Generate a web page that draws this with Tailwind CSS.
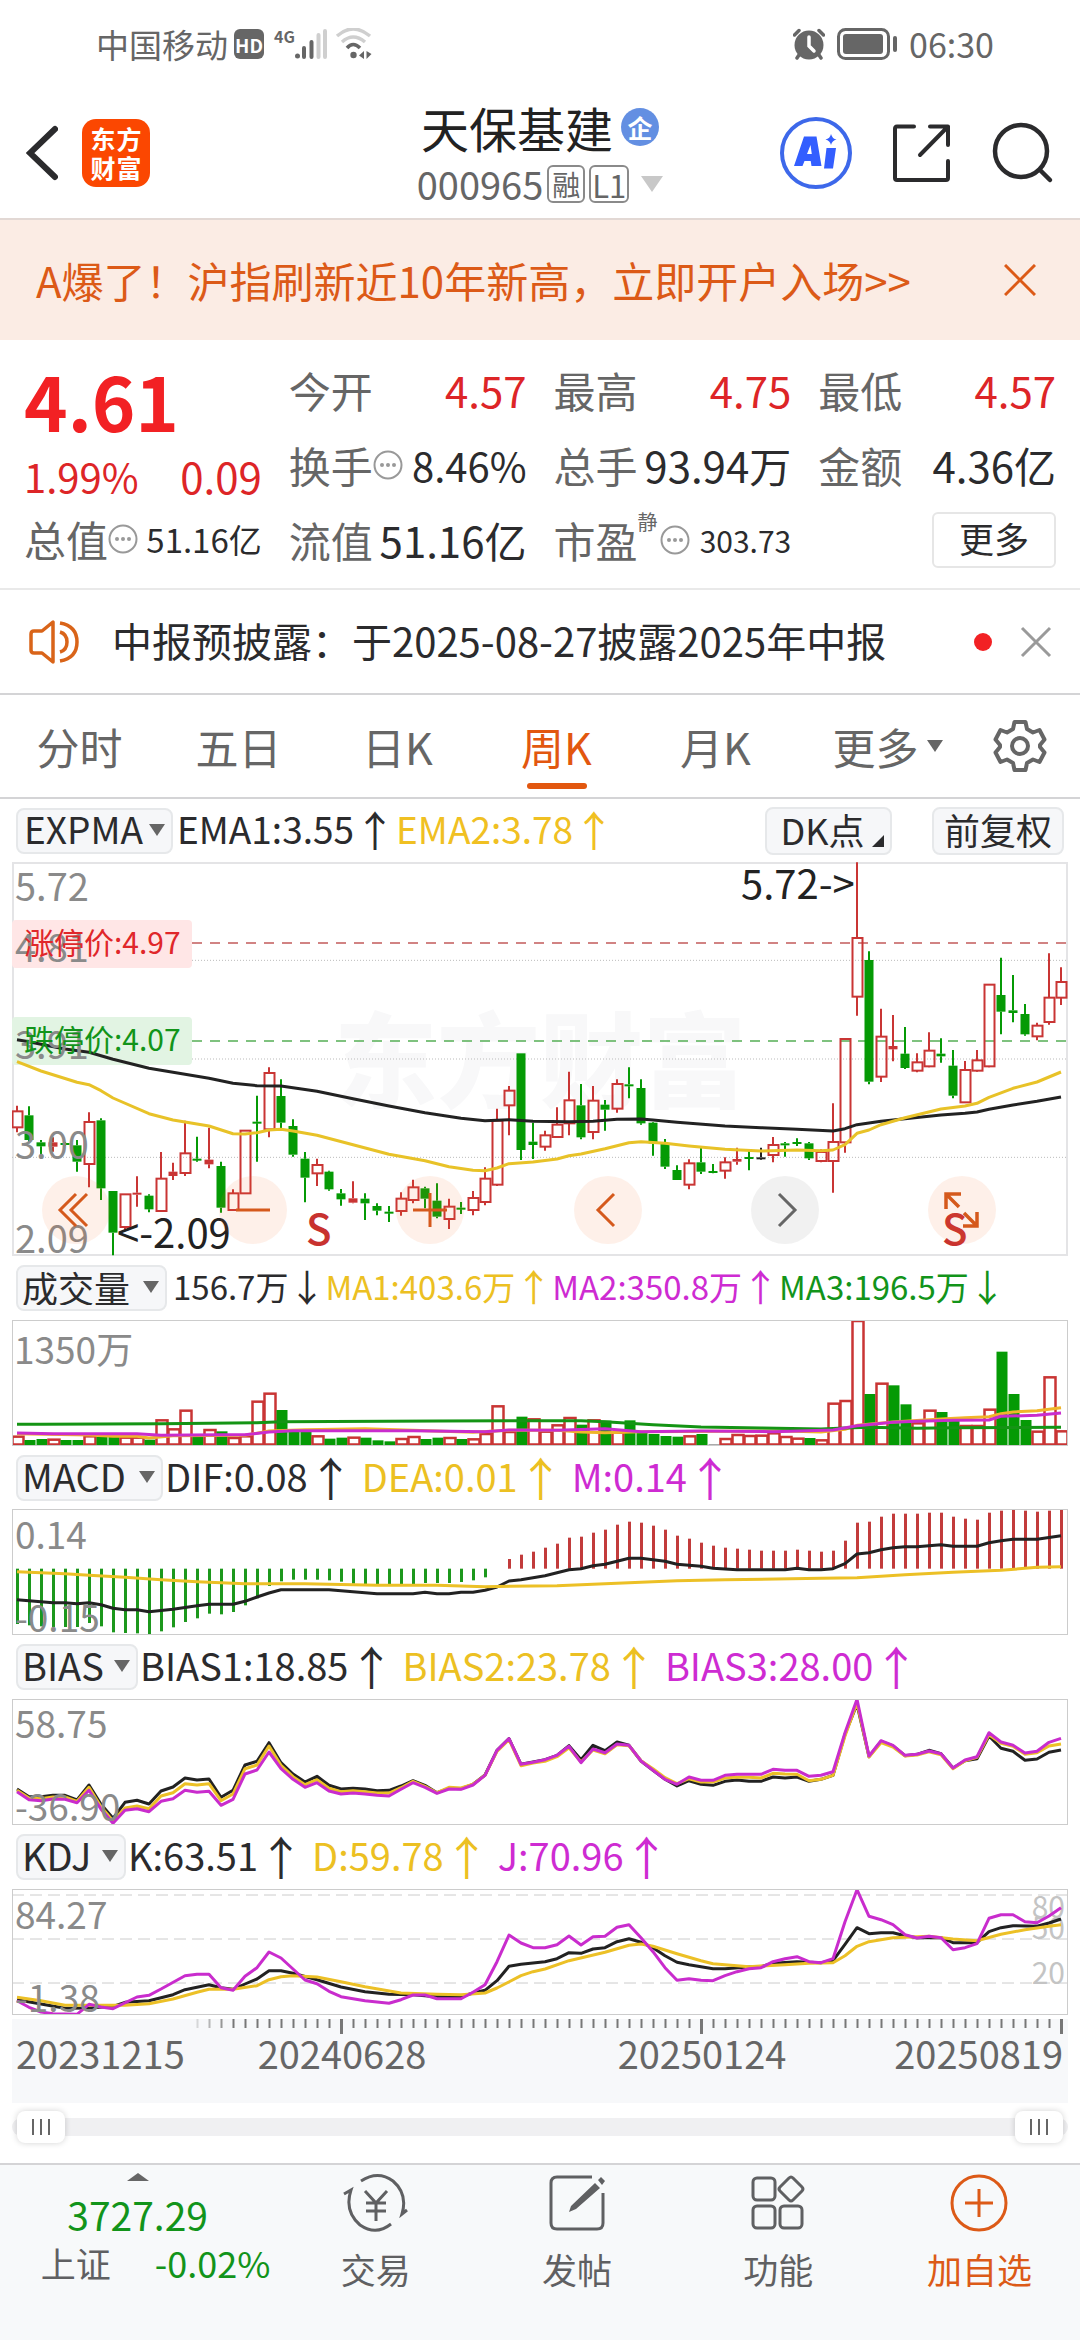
<!DOCTYPE html>
<html lang="zh-CN">
<head>
<meta charset="utf-8">
<meta name="viewport" content="width=device-width, initial-scale=1">
<title>天保基建 000965</title>
<script src="https://cdn.jsdelivr.net/npm/@tailwindcss/browser@4"></script>
</head>
<body class="flex min-h-screen flex-col bg-white font-['Noto_Sans_CJK_SC',sans-serif] leading-none text-[#2b2b2d]">

<!-- status bar -->
<div class="flex h-22 items-center justify-between pr-[86px] pl-24 text-[#666]">
  <div class="flex items-center">
    <span class="text-[33px]">中国移动</span>
    <span class="ml-[6px] flex size-[30px] items-center justify-center rounded-md bg-[#666] text-[19px] font-bold text-white">HD</span>
    <span class="ml-[10px] self-start text-[16px] font-bold">4G</span>
    <svg class="h-8 w-8" viewBox="0 0 32 32"><circle cx="2.5" cy="28" r="2.5" fill="#666"/><path d="M9 20v9M16.500 14v15" stroke="#666" stroke-width="4" stroke-linecap="round"/><path d="M23.500 7v22M30 3v26" stroke="#cfcfcf" stroke-width="4" stroke-linecap="round"/></svg>
    <svg class="ml-2 h-8 w-10" viewBox="0 0 40 32" fill="none" stroke-width="3.500"><path d="M2 8Q18-6 35 8M7 14Q18 4 30 14" stroke="#cfcfcf"/><path d="M12 20Q18 13 25 20" stroke="#666"/><circle cx="18.500" cy="27" r="3.200" fill="#666"/><path d="M29 23v8l-5-3.500zM31.500 23v8l5-5z" fill="#666"/></svg>
  </div>
  <div class="flex items-center">
    <svg class="h-8 w-8" viewBox="0 0 32 32" fill="none"><circle cx="16" cy="17" r="14.500" fill="#666"/><path d="M16 9v9l5 5" stroke="#fff" stroke-width="3.500" stroke-linecap="round"/><path d="M1.500 7l4.500-4.500M30.500 7l-4.500-4.500M6 27l-2 3M26 27l2 3" stroke="#666" stroke-width="3.500" stroke-linecap="round"/></svg>
    <svg class="ml-3 h-8 w-[60px]" viewBox="0 0 60 32"><rect x="1.500" y="1.500" width="50" height="29" rx="7" fill="none" stroke="#666" stroke-width="3"/><rect x="6" y="6" width="40" height="20" rx="3" fill="#666"/><rect x="56" y="8" width="4" height="16" rx="2" fill="#666"/></svg>
    <time class="ml-3 text-[34px]">06:30</time>
  </div>
</div>

<!-- title bar -->
<header class="grid h-[132px] grid-cols-[1fr_auto_1fr] items-center border-b-2 border-[#e2d8d4] pr-[26px] pl-[26px]">
  <div class="flex items-center gap-6">
    <button type="button" aria-label="返回"><svg class="h-15 w-8" viewBox="0 0 32 60" fill="none" stroke="#2b2b2d" stroke-width="6" stroke-linecap="round"><path d="M29 6L4 30L29 54"/></svg></button>
    <a href="#" class="grid size-17 grid-cols-2 content-center justify-items-center rounded-[14px] bg-[#fb4701] px-2 text-[25px] leading-[29px] font-bold text-white"><span>东</span><span>方</span><span>财</span><span>富</span></a>
  </div>
  <div class="flex flex-col items-center gap-[14px]">
    <h1 class="flex items-center gap-2 text-5xl text-[#222]">天保基建<span class="flex size-[38px] items-center justify-center rounded-full bg-[#638fe2] text-[25px] font-bold text-white">企</span></h1>
    <div class="flex items-center text-[38px] text-[#666]">000965
      <span class="ml-1 flex size-[38px] items-center justify-center rounded-md border-2 border-[#8a8a8a] text-[28px]">融</span>
      <span class="ml-1 flex h-[38px] w-10 items-center justify-center rounded-md border-2 border-[#8a8a8a] text-[31px]">L1</span>
      <svg class="ml-3 h-4 w-[22px]" viewBox="0 0 22 16"><path d="M0 0H22L11 16z" fill="#c8c8c8"/></svg>
    </div>
  </div>
  <div class="flex items-center justify-end gap-10">
    <button type="button" aria-label="AI"><svg class="size-[72px]" viewBox="0 0 72 72"><circle cx="36" cy="36" r="34" fill="none" stroke="#3d68ea" stroke-width="4"/><path fill="#335eff" fill-rule="evenodd" d="M24 19.500h12.500l5 29.500h-10l-.8-5h-6.200l-2 5h-8.500zM30.500 28l-3.500 9h4.800zM46.500 31h9.500l-3 20.500h-9zM51 17q1.500 5 5.500 5.500q-4.500 1-5.500 5.500q-1-4.500-5.500-5.500q4.500-1 5.500-5.500z"/></svg></button>
    <button type="button" aria-label="分享"><svg class="size-15" viewBox="0 0 60 60" fill="none" stroke="#2b2b2d" stroke-width="4" stroke-linecap="round" stroke-linejoin="round"><path d="M22 3.500H5Q3 3.500 3 6V55Q3 57 5 57H54Q56 57 56 55V38M38 3.500H56V22M56 3.500L28 32"/></svg></button>
    <button type="button" aria-label="搜索"><svg class="size-[62px]" viewBox="0 0 62 62" fill="none" stroke="#2b2b2d" stroke-width="4.500" stroke-linecap="round"><circle cx="29" cy="29" r="26"/><path d="M48 48L58 58"/></svg></button>
  </div>
</header>

<!-- promotion banner -->
<section class="flex h-30 items-center justify-between bg-[#fbece4] pr-11 pl-9 text-[#dc5a17]">
  <a href="#" class="text-[42px]">A爆了！沪指刷新近10年新高，立即开户入场&gt;&gt;</a>
  <button type="button" aria-label="关闭"><svg class="size-8" viewBox="0 0 32 32" stroke="#dc5a17" stroke-width="3"><path d="M1 1L31 31M31 1L1 31"/></svg></button>
</section>

<!-- quote summary -->
<section class="grid h-[250px] grid-cols-4 gap-x-[27px] border-b-2 border-[#e9e9e9] px-6 pt-3 text-[42px] whitespace-nowrap">
  <div class="flex flex-col text-[#dd2527]">
    <div class="flex h-24 items-center text-[74px] font-bold text-[#f22124]">4.61</div>
    <div class="flex h-14 items-center justify-between"><span class="text-[40px]">1.99%</span><span>0.09</span></div>
    <div class="flex h-[70px] items-center justify-between text-[#666]"><span class="flex items-center">总值<svg class="size-[30px]" viewBox="0 0 30 30" fill="#999"><circle cx="15" cy="15" r="13.500" fill="none" stroke="#999" stroke-width="2"/><circle cx="9" cy="15" r="2"/><circle cx="15" cy="15" r="2"/><circle cx="21" cy="15" r="2"/></svg></span><span class="text-[33px] text-[#2b2b2d]">51.16亿</span></div>
  </div>
  <div class="grid grid-rows-[75px_75px_75px] *:flex *:items-center *:justify-between">
    <div><span class="text-[#666]">今开</span><span class="text-[#dd2527]">4.57</span></div>
    <div><span class="flex items-center text-[#666]">换手<svg class="size-[30px]" viewBox="0 0 30 30" fill="#999"><circle cx="15" cy="15" r="13.500" fill="none" stroke="#999" stroke-width="2"/><circle cx="9" cy="15" r="2"/><circle cx="15" cy="15" r="2"/><circle cx="21" cy="15" r="2"/></svg></span><span class="text-[40px]">8.46%</span></div>
    <div><span class="text-[#666]">流值</span><span>51.16亿</span></div>
  </div>
  <div class="grid grid-rows-[75px_75px_75px] *:flex *:items-center *:justify-between">
    <div><span class="text-[#666]">最高</span><span class="text-[#dd2527]">4.75</span></div>
    <div><span class="text-[#666]">总手</span><span>93.94万</span></div>
    <div><span class="flex items-center text-[#666]">市盈<span class="-mt-9 text-[20px]">静</span><svg class="ml-[2px] size-[30px]" viewBox="0 0 30 30" fill="#999"><circle cx="15" cy="15" r="13.500" fill="none" stroke="#999" stroke-width="2"/><circle cx="9" cy="15" r="2"/><circle cx="15" cy="15" r="2"/><circle cx="21" cy="15" r="2"/></svg></span><span class="text-[30px]">303.73</span></div>
  </div>
  <div class="grid grid-rows-[75px_75px_75px] *:flex *:items-center *:justify-between">
    <div><span class="text-[#666]">最低</span><span class="text-[#dd2527]">4.57</span></div>
    <div><span class="text-[#666]">金额</span><span>4.36亿</span></div>
    <div><button type="button" class="ml-auto h-14 w-31 rounded-md border-2 border-[#e6e6e6] pb-1 text-[35px]">更多</button></div>
  </div>
</section>

<!-- announcement -->
<section class="flex h-[105px] items-center border-b-2 border-[#d4d4d6] pr-7 pl-7">
  <svg class="h-11 w-14" viewBox="0 0 56 44" fill="none" stroke="#d96419" stroke-width="3.500" stroke-linejoin="round"><path d="M25 2V42L14 33H6Q3 33 3 30V14Q3 11 6 11H14zM32 12Q39 14 39 22T32 32M32 3Q49 6 49 22T32 41"/></svg>
  <a href="#" class="ml-7 pb-1 text-[40px]">中报预披露：于2025-08-27披露2025年中报</a>
  <span class="ml-auto size-[18px] rounded-full bg-[#f22124]"></span>
  <button type="button" aria-label="关闭" class="ml-7"><svg class="size-8" viewBox="0 0 32 32" stroke="#9a9a9a" stroke-width="3"><path d="M2 2L30 30M30 2L2 30"/></svg></button>
</section>

<!-- period tabs -->
<nav class="grid h-[104px] grid-cols-[159fr_159fr_159fr_159fr_159fr_185fr_80fr] border-b-2 border-[#d4d4d6] pr-5 text-[43px] text-[#666]">
  <button type="button">分时</button>
  <button type="button">五日</button>
  <button type="button">日K</button>
  <button type="button" class="relative text-[#e2570f]">周K<span class="absolute bottom-2 left-1/2 h-[6px] w-15 -translate-x-1/2 rounded-full bg-[#e2570f]"></span></button>
  <button type="button">月K</button>
  <button type="button" class="flex items-center justify-center gap-2">更多<svg class="h-3 w-4" viewBox="0 0 16 12"><path d="M0 0H16L8 12z" fill="#666"/></svg></button>
  <button type="button" aria-label="设置" class="flex items-center justify-center"><svg class="size-[54px]" viewBox="0 0 54 54" fill="none" stroke="#666" stroke-width="4" stroke-linejoin="round"><path d="M21.500 3H32.500L34 10L40 13.500L46.500 11L51.500 20.500L47 26V28L51.500 33.500L46.500 43L40 40.500L34 44L32.500 51H21.500L20 44L14 40.500L7.500 43L2.500 33.500L7 28V26L2.500 20.500L7.500 11L14 13.500L20 10z"/><circle cx="27" cy="27" r="8"/></svg></button>
</nav>

<main class="px-3">
  <!-- price -->
  <div class="flex h-[63px] items-center pl-1 text-[37px] [&>span]:flex [&>span]:items-center [&>span]:pb-1">
    <label class="relative block"><select aria-label="主图指标" class="block h-[46px] w-[157px] appearance-none rounded-lg border-2 border-[#e6e8ea] bg-[#f6f7f9] pb-1 pl-[6px]"><option>EXPMA</option></select><svg class="pointer-events-none absolute top-4 right-2 h-3 w-4" viewBox="0 0 16 12"><path d="M0 0H16L8 12z" fill="#666"/></svg></label>
    <span class="ml-1">EMA1:3.55<i class="text-[42px] not-italic">↑</i></span>
    <span class="text-[#f0c022]">EMA2:3.78<i class="text-[42px] not-italic">↑</i></span>
    <button type="button" class="relative ml-auto h-12 w-[127px] rounded-lg border-2 border-[#e6e8ea] bg-[#f6f7f9] pr-3 pb-1 text-4xl">DK点<svg class="absolute right-[6px] bottom-[6px] size-3" viewBox="0 0 12 12"><path d="M12 0V12H0z" fill="#2b2b2d"/></svg></button>
    <button type="button" class="mr-1 ml-10 h-12 w-[132px] rounded-lg border-2 border-[#e6e8ea] bg-[#f6f7f9] pb-1 text-4xl">前复权</button>
  </div>
  <div class="relative">
    <svg id="price" class="block w-full" viewBox="0 0 1056 394"></svg>
    <div class="absolute right-[72px] bottom-3 left-[30px] flex justify-between *:flex *:size-17 *:items-center *:justify-center *:rounded-full">
      <button type="button" aria-label="最左" class="bg-[#f26a2a]/10"><svg class="size-10" viewBox="0 0 40 40" fill="none" stroke="#d5591c" stroke-width="3"><path d="M20 4L4 20L20 36M31 4L15 20L31 36"/></svg></button>
      <button type="button" aria-label="缩小" class="bg-[#f26a2a]/10"><svg class="size-10" viewBox="0 0 40 40" stroke="#d5591c" stroke-width="3"><path d="M3 20H37"/></svg></button>
      <button type="button" aria-label="放大" class="bg-[#f26a2a]/10"><svg class="size-10" viewBox="0 0 40 40" stroke="#d5591c" stroke-width="3"><path d="M3 20H37M20 3V37"/></svg></button>
      <button type="button" aria-label="左移" class="bg-[#f26a2a]/10"><svg class="size-10" viewBox="0 0 40 40" fill="none" stroke="#d5591c" stroke-width="3"><path d="M26 4L10 20L26 36"/></svg></button>
      <button type="button" aria-label="右移" class="bg-[#777]/10"><svg class="size-10" viewBox="0 0 40 40" fill="none" stroke="#666" stroke-width="3"><path d="M14 4L30 20L14 36"/></svg></button>
      <button type="button" aria-label="全屏" class="bg-[#f26a2a]/10"><svg class="size-10" viewBox="0 0 40 40" fill="none" stroke="#d5591c" stroke-width="3.500"><path d="M4 19V4H19M4 4L17 17M22 23L35 36M35 22V36H21"/></svg></button>
    </div>
  </div>

  <!-- volume -->
  <div class="flex h-16 items-center pl-1 text-[33px] [&>span]:flex [&>span]:items-center [&>span]:pb-1">
    <label class="relative block"><select aria-label="成交量指标" class="block h-[46px] w-[151px] appearance-none rounded-lg border-2 border-[#e6e8ea] bg-[#f6f7f9] pb-1 pl-1 text-4xl"><option>成交量</option></select><svg class="pointer-events-none absolute top-4 right-2 h-3 w-4" viewBox="0 0 16 12"><path d="M0 0H16L8 12z" fill="#666"/></svg></label>
    <span class="ml-[6px]">156.7万<i class="text-[37px] not-italic">↓</i></span>
    <span class="text-[#ecc022]">MA1:403.6万<i class="text-[37px] not-italic">↑</i></span>
    <span class="text-[#ce2bd2]">MA2:350.8万<i class="text-[37px] not-italic">↑</i></span>
    <span class="text-[#12941a]">MA3:196.5万<i class="text-[37px] not-italic">↓</i></span>
  </div>
  <svg id="volume" class="block w-full" viewBox="0 0 1056 126"></svg>

  <!-- MACD -->
  <div class="flex h-[63px] items-center pl-1 text-[38px] [&>span]:flex [&>span]:items-center [&>span]:pb-1">
    <label class="relative block"><select aria-label="MACD指标" class="block h-[46px] w-[147px] appearance-none rounded-lg border-2 border-[#e6e8ea] bg-[#f6f7f9] pb-1 pl-1"><option>MACD</option></select><svg class="pointer-events-none absolute top-4 right-2 h-3 w-4" viewBox="0 0 16 12"><path d="M0 0H16L8 12z" fill="#666"/></svg></label>
    <span class="ml-[2px]">DIF:0.08<i class="text-[46px] not-italic">↑</i></span>
    <span class="ml-2 text-[#ecc022]">DEA:0.01<i class="text-[46px] not-italic">↑</i></span>
    <span class="ml-2 text-[#ce2bd2]">M:0.14<i class="text-[46px] not-italic">↑</i></span>
  </div>
  <svg id="macd" class="block w-full" viewBox="0 0 1056 126"></svg>

  <!-- BIAS -->
  <div class="flex h-16 items-center pl-1 text-[38px] [&>span]:flex [&>span]:items-center [&>span]:pb-1">
    <label class="relative block"><select aria-label="BIAS指标" class="block h-[46px] w-[122px] appearance-none rounded-lg border-2 border-[#e6e8ea] bg-[#f6f7f9] pb-1 pl-1"><option>BIAS</option></select><svg class="pointer-events-none absolute top-4 right-2 h-3 w-4" viewBox="0 0 16 12"><path d="M0 0H16L8 12z" fill="#666"/></svg></label>
    <span class="ml-[2px]">BIAS1:18.85<i class="text-[46px] not-italic">↑</i></span>
    <span class="ml-2 text-[#ecc022]">BIAS2:23.78<i class="text-[46px] not-italic">↑</i></span>
    <span class="ml-2 text-[#ce2bd2]">BIAS3:28.00<i class="text-[46px] not-italic">↑</i></span>
  </div>
  <svg id="bias" class="block w-full" viewBox="0 0 1056 126"></svg>

  <!-- KDJ -->
  <div class="flex h-16 items-center pl-1 text-[38px] [&>span]:flex [&>span]:items-center [&>span]:pb-1">
    <label class="relative block"><select aria-label="KDJ指标" class="block h-[46px] w-[110px] appearance-none rounded-lg border-2 border-[#e6e8ea] bg-[#f6f7f9] pb-1 pl-1"><option>KDJ</option></select><svg class="pointer-events-none absolute top-4 right-2 h-3 w-4" viewBox="0 0 16 12"><path d="M0 0H16L8 12z" fill="#666"/></svg></label>
    <span class="ml-[2px]">K:63.51<i class="text-[46px] not-italic">↑</i></span>
    <span class="ml-2 text-[#ecc022]">D:59.78<i class="text-[46px] not-italic">↑</i></span>
    <span class="ml-2 text-[#ce2bd2]">J:70.96<i class="text-[46px] not-italic">↑</i></span>
  </div>
  <svg id="kdj" class="block w-full" viewBox="0 0 1056 126"></svg>

  <!-- date axis -->
  <svg id="axis" class="mt-1 block w-full bg-[#f7f8fa]" viewBox="0 0 1056 84"></svg>

  <!-- visible range -->
  <div class="mt-2 grid h-8 items-center *:col-start-1 *:row-start-1">
    <div class="h-[18px] rounded-full bg-[#f0f0f2]"></div>
    <input type="range" aria-label="起始日期" min="0" max="87" value="0" class="pointer-events-none mx-[5px] h-8 appearance-none bg-transparent [&::-webkit-slider-thumb]:pointer-events-auto [&::-webkit-slider-thumb]:h-8 [&::-webkit-slider-thumb]:w-12 [&::-webkit-slider-thumb]:appearance-none [&::-webkit-slider-thumb]:rounded-lg [&::-webkit-slider-thumb]:bg-white [&::-webkit-slider-thumb]:bg-[repeating-linear-gradient(90deg,#666_0_2px,transparent_2px_8px)] [&::-webkit-slider-thumb]:bg-[length:18px_16px] [&::-webkit-slider-thumb]:bg-center [&::-webkit-slider-thumb]:bg-no-repeat [&::-webkit-slider-thumb]:shadow-[0_0_6px_rgba(0,0,0,0.18)]">
    <input type="range" aria-label="结束日期" min="0" max="87" value="87" class="pointer-events-none mx-[5px] h-8 appearance-none bg-transparent [&::-webkit-slider-thumb]:pointer-events-auto [&::-webkit-slider-thumb]:h-8 [&::-webkit-slider-thumb]:w-12 [&::-webkit-slider-thumb]:appearance-none [&::-webkit-slider-thumb]:rounded-lg [&::-webkit-slider-thumb]:bg-white [&::-webkit-slider-thumb]:bg-[repeating-linear-gradient(90deg,#666_0_2px,transparent_2px_8px)] [&::-webkit-slider-thumb]:bg-[length:18px_16px] [&::-webkit-slider-thumb]:bg-center [&::-webkit-slider-thumb]:bg-no-repeat [&::-webkit-slider-thumb]:shadow-[0_0_6px_rgba(0,0,0,0.18)]">
  </div>
</main>

<!-- bottom bar -->
<footer class="mt-5 grid grow grid-cols-[275fr_201fr_201fr_201fr_201fr] items-start border-t-2 border-[#d4d4d6] bg-[#f7f9fa] text-[35px] text-[#5f6062]">
  <a href="#" class="flex flex-col items-center pt-2">
    <svg class="h-2 w-[22px]" viewBox="0 0 22 8"><path d="M0 8H22L11 0z" fill="#666"/></svg>
    <span class="mt-[14px] text-[39px] text-[#12941a]">3727.29</span>
    <span class="mt-2 flex items-center gap-11 pl-9">上证<span class="text-4xl text-[#12941a]">-0.02%</span></span>
  </a>
  <button type="button" class="flex flex-col items-center gap-[18px] pt-2"><svg class="h-[60px] w-[68px]" viewBox="0 0 68 60" fill="none" stroke="#5f6062" stroke-width="3"><path d="M19 8Q36-3 51 8Q66 21 60 41L65 37M49 51Q34 63 18 52Q2 38 9 17L2 21M23 18L34 30L45 18M24 30H44M24 38H44M34 30V48"/></svg>交易</button>
  <button type="button" class="flex flex-col items-center gap-[18px] pt-2"><svg class="size-15" viewBox="0 0 60 60" fill="none" stroke="#5f6062" stroke-width="3"><path d="M45 4H10Q4 4 4 10V50Q4 56 10 56H50Q56 56 56 50V20"/><path d="M48 10L53 15L29 36L22 39L24 33zM51 7L54 4L58 8L55 12z" fill="#5f6062" stroke="none"/></svg>发帖</button>
  <button type="button" class="flex flex-col items-center gap-[18px] pt-2"><svg class="size-15" viewBox="0 0 60 60" fill="none" stroke="#5f6062" stroke-width="3"><rect x="5" y="5" width="22" height="22" rx="4"/><rect x="5" y="33" width="22" height="22" rx="4"/><rect x="32" y="33" width="22" height="22" rx="4"/><path d="M41 5Q43 3 45 5L54 14Q56 16 54 18L45 27Q43 29 41 27L32 18Q30 16 32 14z"/></svg>功能</button>
  <button type="button" class="flex flex-col items-center gap-[18px] pt-2 text-[#dc5a17]"><svg class="size-15" viewBox="0 0 60 60" fill="none" stroke="#dc5a17" stroke-width="3"><circle cx="30" cy="30" r="27"/><path d="M16 30H44M30 16V44"/></svg>加自选</button>
</footer>

<script>
const RED = '#c93534', GREEN = '#059a05', BLACK = '#222', YELLOW = '#ecc026', PURPLE = '#c92ccd';
const NS = 'http://www.w3.org/2000/svg';
const X = i => 5 + 12 * i;

function el(svg, tag, attrs, text) {
  const n = document.createElementNS(NS, tag);
  for (const k in attrs) n.setAttribute(k, attrs[k]);
  if (text) n.textContent = text;
  svg.appendChild(n);
  return n;
}
// Series values are stored in thirds of a drawing unit, counted from each panel's own origin.
const scale = top => v => (v - top) / 3;
function label(svg, x, y, text, size = 37, fill = '#8a8a8a', extra = {}) {
  el(svg, 'text', { x, y, 'font-size': size, fill, ...extra }, text);
}
function line(svg, y, data, color, width = 3) {
  const pts = data.trim().split(/\s+/).map(p => { const [i, v] = p.split(','); return X(+i) + ',' + y(+v).toFixed(1); });
  el(svg, 'polyline', { points: pts.join(' '), fill: 'none', stroke: color, 'stroke-width': width, 'stroke-linejoin': 'round' });
}
function frame(svg, h, color = '#ccc') {
  el(svg, 'rect', { x: .5, y: .5, width: 1055, height: h - 1, fill: 'none', stroke: color });
}

// ---- price: colour high bodyTop bodyBottom low
{
  const s = document.getElementById('price'), y = scale(36);
  el(s, 'rect', { x: 1, y: 1, width: 1054, height: 392, fill: 'none', stroke: '#e4e4e6', 'stroke-width': 2 });
  label(s, 322, 238, '东方财富', 103, '#f8f8f9', { 'font-weight': 900 });
  for (const v of [331, 627, 922]) el(s, 'path', { d: `M0 ${y(v)}H1056`, stroke: '#bbb', 'stroke-dasharray': '1 2' });
  el(s, 'path', { d: 'M0 81H1056', stroke: '#c25b5b', 'stroke-width': 1.5, 'stroke-dasharray': '10 8' });
  el(s, 'path', { d: 'M0 179H1056', stroke: '#56ae56', 'stroke-width': 1.5, 'stroke-dasharray': '10 8' });
  el(s, 'rect', { x: 0, y: 58, width: 180, height: 48, rx: 4, fill: '#ffe6e6' });
  el(s, 'rect', { x: 0, y: 155, width: 180, height: 48, rx: 4, fill: '#e2f4e3' });
  const rows = `R 767 784 832 847|G 769 796 870 880|G 870 877 889 921|R 862 877 890 905|G 876 879 885 887|G 870 886 935 965|R 787 816 942 1012|G 805 811 1015 1050|G 1023 1023 1148 1216|R 1033 1033 1131 1143|R 979 1028 1034 1070|G 1033 1037 1078 1087|R 906 986 1083 1083|R 938 965 978 990|R 812 910 969 978|G 860 926 931 935|R 833 929 943 955|G 935 948 1073 1088|R 1018 1030 1080 1083|R 842 842 1030 1030|G 737 815 820 935|R 652 669 838 862|G 688 738 818 835|G 808 828 914 920|G 906 926 983 1057|R 926 945 970 1008|G 962 965 1018 1022|G 1017 1030 1048 1067|R 994 1045 1058 1060|G 1030 1046 1060 1110|G 1060 1068 1082 1096|G 1068 1085 1090 1116|R 1027 1046 1083 1097|R 989 1012 1050 1060|G 1010 1015 1046 1075|G 1000 1052 1100 1105|R 1046 1070 1107 1137|G 1056 1073 1078 1092|R 1023 1044 1080 1096|R 952 986 1056 1066|R 776 812 1004 1008|R 708 722 766 856|G 610 610 900 930|G 818 875 885 927|R 842 856 890 902|R 772 824 861 861|R 665 751 820 856|G 702 766 862 868|R 708 752 846 868|G 750 764 779 842|R 688 702 776 788|G 652 703 709 745|G 688 714 820 824|G 816 818 880 917|G 867 882 950 957|G 946 960 990 990|R 928 940 1004 1018|G 888 937 965 972|G 942 963 969 970|R 922 937 962 986|R 893 927 935 944|G 903 921 925 961|K 893 922 928 930|R 861 885 915 937|G 876 880 886 920|G 865 876 881 888|G 876 880 925 930|R 898 906 933 937|R 760 876 933 1028|R 565 567 877 908|R 37 264 440 497|G 304 330 695 703|R 476 560 680 696|R 495 588 598 634|G 531 611 654 657|R 610 637 662 667|R 547 602 649 652|G 565 611 619 638|G 600 647 737 745|R 633 660 757 757|R 600 631 662 665|R 402 404 649 652|G 323 435 485 553|G 375 481 489 517|G 462 492 553 557|R 518 527 559 571|R 310 443 516 524|R 352 396 443 465`.split('|');
  rows.forEach((r, i) => {
    const [c, ...v] = r.split(' '), [h, t, b, l] = v.map(n => y(+n)), x = X(i);
    const col = c === 'R' ? RED : c === 'G' ? GREEN : BLACK;
    el(s, 'path', { d: `M${x} ${h}V${t}M${x} ${b}V${l}`, stroke: col, 'stroke-width': 2 });
    if (c === 'R' && b - t > 5) el(s, 'rect', { x: x - 4.5, y: t, width: 10, height: b - t, fill: 'none', stroke: col, 'stroke-width': 2 });
    else el(s, 'rect', { x: x - 4.5, y: t, width: 9, height: Math.max(2, b - t), fill: col });
  });
  line(s, y, '0,569 1,575 2,583 4,597 6,607 8,628 11,655 14,673 16,685 18,700 20,707 22,708 25,724 28,746 31,768 34,788 37,805 39,812 41,809 43,814 46,815 48,814 50,808 52,807 53,810 55,817 59,828 62,833 65,838 68,843 69,836 70,824 72,814 74,806 77,795 79,790 80,786 81,778 83,765 85,754 87,741', BLACK);
  line(s, y, '0,635 2,663 5,697 6,704 7,722 8,744 11,791 13,810 14,816 16,828 18,851 19,852 20,848 21,840 22,838 23,843 25,856 28,884 31,913 34,932 36,950 38,961 39,962 40,954 41,941 43,936 45,927 46,917 47,912 49,896 51,878 52,875 54,880 56,888 59,898 62,903 65,900 67,902 68,900 69,884 70,850 71,840 72,824 74,803 77,777 79,768 80,760 81,742 83,715 85,696 87,666', '#e8c228');
  label(s, 3, 39, '5.72', 38);
  label(s, 3, 100, '4.81', 38);
  label(s, 3, 197, '3.91', 38);
  label(s, 3, 297, '3.00', 38);
  label(s, 3, 391, '2.09', 38);
  label(s, 12, 92, '涨停价:4.97', 30, '#e0272a');
  label(s, 12, 189, '跌停价:4.07', 30, '#12941a');
  label(s, 105, 386, '<-2.09', 40, BLACK);
  label(s, 729, 37, '5.72->', 40, BLACK);
  label(s, 294, 383, 'S', 42, '#c8322f', { 'font-weight': 500 });
  label(s, 930, 383, 'S', 42, '#c8322f', { 'font-weight': 500 });
}

// ---- volume: colour + bar top
{
  const s = document.getElementById('volume'), y = scale(177);
  label(s, 2, 44, '1350万');
  'R527 G537 G534 R536 G537 G537 R526 G528 G528 R530 R530 G536 R478 R505 R449 G528 R507 G511 R531 R526 R422 R398 G447 G513 G513 R526 G533 G530 R530 G530 G538 G541 R534 R528 G534 G530 R531 G534 R535 R519 R436 R513 G467 R475 R512 R493 R471 G491 R478 G479 R515 G478 G513 G519 G525 G527 R526 G519 N549 R534 R522 R525 R524 R517 R528 R533 G531 R538 R428 R420 R180 G399 R368 G373 G430 R487 R449 G453 G480 R495 R495 R446 G272 G399 G477 R512 R349 R511'
    .split(' ').forEach((b, i) => {
      const t = y(+b.slice(1)), x = X(i);
      if (b[0] === 'R') el(s, 'rect', { x: x - 4.5, y: t, width: 11, height: 124.5 - t, fill: '#fff', stroke: RED, 'stroke-width': 2.5 });
      else el(s, 'rect', { x: x - 4.5, y: t, width: 11, height: 125 - t, fill: b[0] === 'G' ? GREEN : '#aaa' });
    });
  line(s, y, '0,518 6,522 8,526 10,526 11,531 13,524 19,523 21,510 24,506 29,503 33,508 38,514 41,508 45,508 47,513 49,515 52,512 64,510 67,513 69,505 70,493 73,483 77,474 79,470 81,467 82,458 83,453 85,449 87,440', '#f0b52a');
  line(s, y, '0,490 2,490 12,488 20,485 22,482 35,480 45,479 47,479 49,482 53,491 57,498 62,501 67,504 69,501 71,499 75,502 78,500 87,499', '#149414');
  line(s, y, '0,516 3,518 10,518 12,523 17,521 19,521 21,513 23,509 33,509 39,512 41,507 45,508 49,503 52,512 57,510 63,512 68,507 70,494 73,484 75,481 78,478 81,477 82,466 85,463 87,456', PURPLE);
  frame(s, 126);
}

// ---- MACD: bar ends around the zero line
{
  const s = document.getElementById('macd'), y = scale(748), zero = y(927);
  const ends = '1093 1097 1100 1102 1102 1102 1090 1100 1118 1120 1121 1125 1115 1103 1087 1076 1062 1064 1057 1037 1016 979 965 960 960 960 962 966 972 975 977 979 979 973 970 970 970 967 962 953 927 898 885 876 864 852 834 831 819 810 795 786 789 798 810 828 837 849 858 864 867 870 873 873 873 870 873 876 873 843 789 786 771 762 762 762 759 759 771 777 780 759 753 750 753 756 753 747';
  ends.split(' ').forEach((v, i) => el(s, 'path', { d: `M${X(i) + .5} ${zero}V${y(+v)}`, stroke: +v > 927 ? '#1c981c' : '#c23b3b', 'stroke-width': 3 }));
  line(s, y, '0,1020 1,1023 3,1029 4,1029 5,1032 6,1029 7,1035 8,1046 9,1050 10,1050 11,1056 13,1049 15,1038 16,1034 18,1034 19,1025 20,1012 21,1000 22,990 26,990 28,996 30,1002 33,1002 34,998 35,1002 36,1002 37,998 38,998 39,992 40,982 41,964 42,960 44,948 45,939 46,930 47,927 48,918 49,914 50,905 51,896 52,896 54,905 55,914 57,920 58,926 60,930 64,930 65,926 66,930 67,930 68,927 69,912 70,883 71,879 72,870 73,864 74,861 75,861 77,855 78,860 80,860 81,849 82,843 83,839 85,839 87,828', BLACK);
  line(s, y, '0,936 2,939 4,942 6,947 9,953 12,960 15,966 19,972 24,972 30,977 35,977 39,981 43,979 45,978 49,972 55,963 59,960 67,956 70,954 74,945 78,938 82,932 85,923 87,921', YELLOW);
  label(s, 3, 40, '0.14');
  label(s, 3, 123, '-0.15');
  frame(s, 126);
}

// ---- BIAS
{
  const s = document.getElementById('bias'), y = scale(179);
  line(s, y, '0,449 1,472 2,472 3,468 4,468 5,482 6,437 7,495 8,537 9,489 10,483 11,494 12,455 13,443 14,416 15,422 16,419 17,474 18,453 19,377 20,366 21,310 22,370 23,404 24,428 25,411 26,438 27,449 28,447 29,449 30,454 31,453 32,440 33,424 34,438 35,460 36,447 37,448 38,435 39,407 40,333 41,298 42,375 43,368 44,361 45,348 46,319 47,361 48,318 49,334 50,308 51,318 52,365 53,393 54,420 55,440 56,424 57,435 58,438 59,426 60,422 61,426 62,426 63,413 64,416 65,413 66,426 67,420 68,408 69,285 70,195 71,352 72,306 73,320 74,349 75,345 76,333 77,343 78,386 79,364 80,358 81,290 82,327 83,336 84,363 85,359 86,339 87,332', BLACK);
  line(s, y, '0,453 1,476 2,478 3,473 4,473 5,486 6,444 7,502 8,545 9,506 10,500 11,508 12,470 13,460 14,433 15,437 16,433 17,484 18,464 19,388 20,377 21,320 22,378 23,412 24,436 25,421 26,447 27,457 28,454 29,457 30,461 31,461 32,445 33,426 34,441 35,460 36,444 37,446 38,435 39,408 40,336 41,301 42,379 43,371 44,366 45,352 46,325 47,368 48,332 49,343 50,316 51,319 52,364 53,388 54,415 55,433 56,418 57,428 58,428 59,416 60,413 61,414 62,416 63,402 64,404 65,405 66,424 67,420 68,408 69,290 70,190 71,353 72,310 73,323 74,350 75,347 76,337 77,346 78,388 79,364 80,354 81,286 82,312 83,321 84,345 85,340 86,320 87,314', YELLOW);
  line(s, y, '0,457 1,481 2,484 3,479 4,480 5,490 6,453 7,510 8,552 9,513 10,508 11,517 12,486 13,478 14,453 15,459 16,456 17,498 18,480 19,404 20,392 21,338 22,388 23,420 24,444 25,430 26,455 27,464 28,461 29,464 30,468 31,470 32,450 33,430 34,444 35,462 36,449 37,450 38,437 39,408 40,333 41,298 42,375 43,369 44,361 45,348 46,321 47,370 48,329 49,340 50,314 51,318 52,365 53,393 54,420 55,435 56,413 57,423 58,423 59,408 60,405 61,405 62,405 63,390 64,393 65,393 66,411 67,408 68,397 69,280 70,180 71,350 72,304 73,318 74,348 75,345 76,335 77,343 78,386 79,362 80,352 81,280 82,308 83,318 84,341 85,336 86,309 87,297', PURPLE);
  label(s, 3, 39, '58.75');
  label(s, 3, 122, '-36.90');
  frame(s, 126);
}

// ---- KDJ
{
  const s = document.getElementById('kdj'), y = scale(748);
  for (const v of [766, 898, 1030]) el(s, 'path', { d: `M0 ${y(v)}H1056`, stroke: '#ccc', 'stroke-dasharray': '12 6' });
  const end = { 'text-anchor': 'end' };
  label(s, 1053, 29, '80', 30, '#c4c4c4', end);
  label(s, 1053, 50, '50', 30, '#c4c4c4', end);
  label(s, 1053, 95, '20', 30, '#c4c4c4', end);
  line(s, y, '0,1080 2,1093 4,1106 6,1105 8,1100 9,1088 11,1083 13,1065 14,1050 16,1035 17,1044 18,1049 19,1033 20,1018 21,993 22,993 23,1001 25,1020 27,1042 29,1056 31,1064 33,1065 35,1071 37,1071 38,1060 39,1052 40,1023 41,980 42,974 43,970 44,966 45,957 46,939 47,941 48,928 49,924 50,906 51,897 52,908 53,924 54,948 55,968 56,975 58,987 59,987 61,982 62,981 63,971 65,966 67,969 68,963 69,914 70,864 71,882 72,879 73,879 74,888 75,894 77,894 78,909 80,909 81,876 82,864 83,858 85,860 86,850 87,838', BLACK);
  line(s, y, '0,1073 2,1083 4,1097 6,1097 9,1097 11,1092 13,1078 15,1058 16,1049 18,1049 20,1038 21,1020 22,1011 23,1008 25,1012 27,1026 29,1041 32,1060 35,1064 37,1065 39,1060 40,1045 42,1008 43,996 44,988 46,963 49,938 51,917 52,913 53,920 55,942 57,963 58,972 61,981 64,975 66,971 68,969 69,948 70,920 71,906 73,894 76,890 78,898 80,903 82,884 84,870 86,860 87,855', YELLOW);
  line(s, y, '0,1083 1,1103 2,1117 3,1122 5,1124 6,1094 7,1102 8,1107 10,1072 11,1067 12,1048 14,1008 15,1004 16,1004 17,1044 18,1052 19,1010 20,984 21,937 22,955 23,988 24,1021 25,1032 26,1055 27,1071 29,1083 31,1091 32,1080 33,1066 34,1066 35,1077 37,1077 38,1058 39,1035 40,966 41,886 42,910 43,924 44,924 45,915 46,889 47,916 48,891 49,890 50,863 51,855 52,894 53,936 54,984 55,1022 56,1017 57,1022 58,1023 59,1008 60,996 61,987 62,984 63,966 64,957 65,951 66,966 67,969 68,957 69,846 70,750 71,830 72,840 73,855 74,885 75,895 76,890 77,894 78,930 79,924 80,912 81,836 82,825 83,825 84,846 85,849 86,829 87,804', PURPLE);
  label(s, 3, 40, '84.27');
  label(s, 3, 123, '-1.38');
  frame(s, 126);
}

// ---- date axis
{
  const s = document.getElementById('axis');
  for (let i = 15; i < 88; i++) {
    const major = i % 30 === 27;
    el(s, 'path', { d: `M${X(i) + .5} 0V${major ? 15 : 9}`, stroke: '#777', 'stroke-width': major ? 3 : 2, opacity: i < 19 ? .25 * (i - 14) : 1 });
  }
  const c = '#666';
  label(s, 4, 50, '20231215', 38, c);
  label(s, 330, 50, '20240628', 38, c, { 'text-anchor': 'middle' });
  label(s, 690, 50, '20250124', 38, c, { 'text-anchor': 'middle' });
  label(s, 1051, 50, '20250819', 38, c, { 'text-anchor': 'end' });
}
</script>
</body>
</html>
